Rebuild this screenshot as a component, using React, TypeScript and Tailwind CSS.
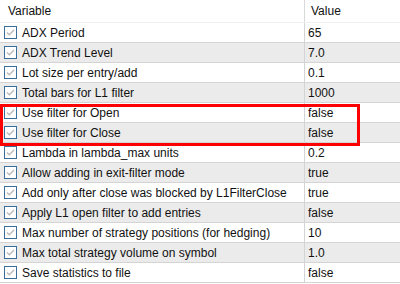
import React from "react";

type Row = { name: string; value: string };

const rows: Row[] = [
	{ name: "ADX Period", value: "65" },
	{ name: "ADX Trend Level", value: "7.0" },
	{ name: "Lot size per entry/add", value: "0.1" },
	{ name: "Total bars for L1 filter", value: "1000" },
	{ name: "Use filter for Open", value: "false" },
	{ name: "Use filter for Close", value: "false" },
	{ name: "Lambda in lambda_max units", value: "0.2" },
	{ name: "Allow adding in exit-filter mode", value: "true" },
	{ name: "Add only after close was blocked by L1FilterClose", value: "true" },
	{ name: "Apply L1 open filter to add entries", value: "false" },
	{ name: "Max number of strategy positions (for hedging)", value: "10" },
	{ name: "Max total strategy volume on symbol", value: "1.0" },
	{ name: "Save statistics to file", value: "false" },
];

function CheckBox() {
	return (
		<svg width="13" height="13" viewBox="0 0 13 13" className="shrink-0">
			<rect x="0.5" y="0.5" width="12" height="12" fill="#fff" stroke="#3a6d99" />
			<path d="M3 6.5 L5.3 8.8 L10 4" fill="none" stroke="#b8b8b8" strokeWidth="1.3" />
		</svg>
	);
}

export default function App() {
	return (
		<div
			className="relative h-[284px] w-[400px] overflow-hidden bg-white text-[12px] text-[#111]"
			style={{ fontFamily: '"Liberation Sans", Arial, sans-serif' }}
		>
			{/* Header */}
			<div className="flex h-[23px] items-center border-b border-[#f0f0f0]">
				<div className="w-[304px] pl-[8px]">Variable</div>
				<div className="h-full w-px bg-[#d9d9d9]" />
				<div className="flex items-center pl-[6px]">Value</div>
			</div>

			{/* Rows */}
			{rows.map((r, i) => (
				<div
					key={r.name}
					className={`flex h-[20px] items-center border-b border-[#d4d4d4] ${
						i % 2 === 1 ? "bg-[#ebebeb]" : "bg-white"
					}`}
				>
					<div className="flex w-[304px] items-center gap-[5px] overflow-hidden whitespace-nowrap pl-[4px]">
						<CheckBox />
						<span>{r.name}</span>
					</div>
					<div className="h-full w-px bg-[#d4d4d4]" />
					<div className="pl-[3px]">{r.value}</div>
				</div>
			))}

			{/* Red highlight */}
			<div className="pointer-events-none absolute left-0 top-[104px] h-[42px] w-[360px] border-[3px] border-[#f00]" />
		</div>
	);
}
